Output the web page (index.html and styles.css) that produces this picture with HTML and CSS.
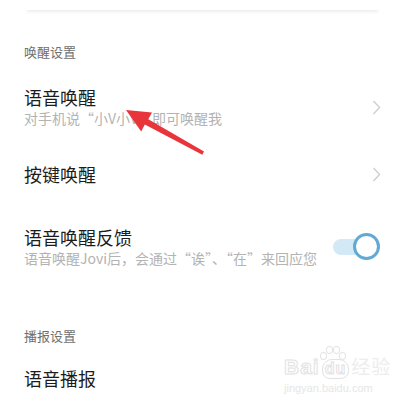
FILE: index.html
```html
<!DOCTYPE html>
<html lang="zh">
<head>
<meta charset="utf-8">
<link rel="stylesheet" href="styles.css">
</head>
<body>
<div class="page">
  <div class="card-top"></div>

  <div class="section-title first">唤醒设置</div>

  <div class="row r1">
    <div class="text">
      <div class="title">语音唤醒</div>
      <div class="sub">对手机说“小V小V”即可唤醒我</div>
    </div>
    <svg class="chev" width="9" height="15" viewBox="0 0 9 15"><polyline points="1.5,1 7.5,7.5 1.5,14" fill="none" stroke="#cfcfcf" stroke-width="1.4"/></svg>
  </div>

  <div class="row r2">
    <div class="text">
      <div class="title">按键唤醒</div>
    </div>
    <svg class="chev" width="9" height="15" viewBox="0 0 9 15"><polyline points="1.5,1 7.5,7.5 1.5,14" fill="none" stroke="#cfcfcf" stroke-width="1.4"/></svg>
  </div>

  <div class="row r3">
    <div class="text">
      <div class="title">语音唤醒反馈</div>
      <div class="sub">语音唤醒Jovi后，会通过“诶”、“在”来回应您</div>
    </div>
    <div class="toggle"><span class="track"></span><span class="knob"></span></div>
  </div>

  <div class="section-title second">播报设置</div>

  <div class="row r4">
    <div class="text">
      <div class="title">语音播报</div>
    </div>
  </div>

  <svg class="arrow" width="401" height="407" viewBox="0 0 401 407">
    <polygon points="126,110 152,112.5 148.3,119.2 204,151.5 202.3,154.8 144.8,124.6 141.2,131.5" fill="#e8353b"/>
  </svg>

  <div class="watermark">
    <div class="paw"><i class="p1"></i><i class="p2"></i><i class="p3"></i><i class="p4"></i></div>
    <div class="wm-main">Bai<span class="du">du</span><span class="jy">经验</span></div>
    <div class="wm-sub">jingyan.baidu.com</div>
  </div>
</div>
</body>
</html>
```

FILE: styles.css
```css
html, body {
  margin: 0;
  padding: 0;
  background: #ffffff;
}
.page {
  position: relative;
  width: 401px;
  height: 407px;
  overflow: hidden;
  font-family: "Noto Sans CJK SC", "Noto Sans", sans-serif;
}
.card-top {
  height: 10px;
  margin: 0 22px 0 26px;
  background: #fff;
  box-shadow: 0 3px 3px -1px rgba(0,0,0,0.07);
}
.section-title {
  font-size: 13px;
  line-height: 20px;
  color: #6f6f6f;
  padding-left: 24px;
}
.section-title.first { margin-top: 32px; }
.section-title.second { margin-top: 58px; }
.row {
  display: flex;
  align-items: center;
  justify-content: space-between;
  padding: 0 20px 0 24px;
}
.r1 { margin-top: 24px; }
.r2 { margin-top: 35px; }
.r3 { margin-top: 41px; }
.r4 { margin-top: 21px; }
.title {
  font-size: 18px;
  line-height: 22px;
  color: #1c1c1c;
}
.sub {
  font-size: 14px;
  line-height: 20px;
  color: #b3b3b3;
}
.toggle {
  position: relative;
  width: 48px;
  height: 28px;
}
.track {
  position: absolute;
  left: 0;
  top: 6px;
  width: 30px;
  height: 16px;
  border-radius: 8px;
  background: #d4e9f6;
}
.knob {
  position: absolute;
  right: 1px;
  top: 0;
  width: 21px;
  height: 21px;
  border-radius: 50%;
  border: 3px solid #62a9d4;
  background: #ffffff;
}
.arrow {
  position: absolute;
  left: 0;
  top: 0;
}
.watermark {
  position: absolute;
  left: 284px;
  top: 354px;
  color: #e6e6e6;
}
.paw {
  position: absolute;
  left: 36px;
  top: -8px;
  width: 24px;
  height: 14px;
}
.paw i {
  position: absolute;
  width: 5px;
  height: 6px;
  border: 1px solid #e4e4e4;
  border-radius: 50%;
}
.paw .p1 { left: 0; top: 6px; }
.paw .p2 { left: 6px; top: 0; }
.paw .p3 { left: 13px; top: 0; }
.paw .p4 { left: 19px; top: 6px; }
.wm-main {
  font-family: "Liberation Sans", sans-serif;
  font-size: 21px;
  font-weight: bold;
  line-height: 24px;
  color: transparent;
  -webkit-text-stroke: 1px #e2e2e2;
  letter-spacing: 1px;
}
.wm-main .du {
  display: inline-block;
  font-size: 16px;
  border: 1px solid #e2e2e2;
  border-radius: 10px 10px 8px 8px;
  padding: 0 2px;
  line-height: 18px;
  margin: 0 2px;
}
.wm-main .jy {
  font-family: "Noto Sans CJK SC", sans-serif;
  font-weight: normal;
  font-size: 19px;
  color: #ededed;
  -webkit-text-stroke: 0;
}
.wm-sub {
  font-family: "Liberation Sans", sans-serif;
  font-size: 11px;
  line-height: 14px;
  color: #e6e6e6;
  margin-top: 2px;
}
```
